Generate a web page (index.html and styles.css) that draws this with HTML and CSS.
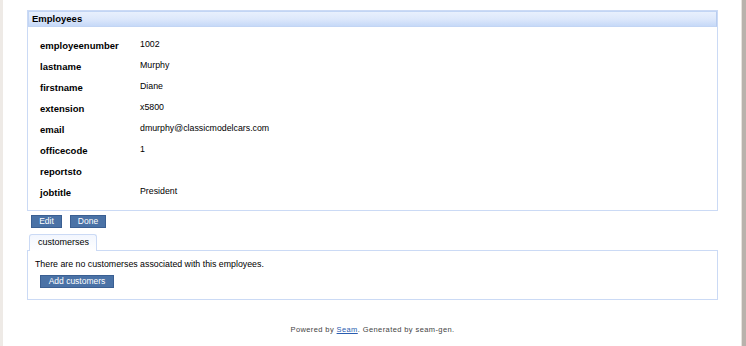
FILE: index.html
```html
<!DOCTYPE html>
<html>
<head>
<meta charset="utf-8">
<link rel="stylesheet" href="styles.css">
</head>
<body>
<div class="page">
  <div class="panel">
    <div class="panel-head">Employees</div>
    <table class="props">
      <tr><th>employeenumber</th><td>1002</td></tr>
      <tr><th>lastname</th><td>Murphy</td></tr>
      <tr><th>firstname</th><td>Diane</td></tr>
      <tr><th>extension</th><td>x5800</td></tr>
      <tr><th>email</th><td>dmurphy@classicmodelcars.com</td></tr>
      <tr><th>officecode</th><td>1</td></tr>
      <tr><th>reportsto</th><td></td></tr>
      <tr><th>jobtitle</th><td>President</td></tr>
    </table>
  </div>
  <div class="actions">
    <button class="btn btn-edit">Edit</button>
    <button class="btn btn-done">Done</button>
  </div>
  <div class="tabs">
    <div class="tab">customerses</div>
  </div>
  <div class="tab-panel">
    <div class="msg">There are no customerses associated with this employees.</div>
    <button class="btn btn-add">Add customers</button>
  </div>
  <div class="footer">Powered by <a href="#">Seam</a>. Generated by seam-gen.</div>
</div>
</body>
</html>
```
FILE: styles.css
```css
html, body {
  margin: 0;
  padding: 0;
  background: #ffffff;
}
body {
  font-family: "Liberation Sans", Arial, sans-serif;
  color: #000;
}
.page {
  width: 746px;
  min-height: 346px;
  box-sizing: border-box;
  padding: 10px 24px 0 24px;
  border-left: 3px solid #eeeae6;
  border-right: 4px solid #b8b2ac;
  box-shadow: inset -1px 0 0 #e6e2de;
  display: flex;
  flex-direction: column;
  align-items: flex-start;
}
.panel {
  width: 691px;
  box-sizing: border-box;
  border: 1px solid #cbdaf5;
  height: 201px;
}
.panel-head {
  height: 16px;
  box-sizing: border-box;
  background: linear-gradient(#e8f0fd 0%, #dde8fb 50%, #c6d9f8 100%);
  border: 1px solid #c2d5f4;
  border-right-color: #b8cdf0;
  font-weight: bold;
  font-size: 9.5px;
  line-height: 14px;
  padding-left: 3px;
  color: #000;
}
.props {
  border-collapse: collapse;
  margin: 8px 0 0 12px;
}
.props th {
  text-align: left;
  font-weight: bold;
  font-size: 9.5px;
  width: 100px;
  height: 21px;
  padding: 0;
  vertical-align: middle;
}
.props td {
  font-size: 8.8px;
  vertical-align: middle;
  padding: 0 0 4px 0;
  height: 21px;
  box-sizing: border-box;
}
.actions {
  display: flex;
  gap: 8px;
  margin: 4px 0 0 4px;
}
.btn {
  font-family: "Liberation Sans", Arial, sans-serif;
  background: #4a72a6;
  color: #fff;
  border: 1px solid #3a5f92;
  font-size: 8.5px;
  height: 13px;
  padding: 0 8px;
  line-height: 11px;
  margin: 0;
  box-sizing: border-box;
}
.btn-edit { width: 31px; padding: 0; }
.btn-done { width: 36px; padding: 0; }
.tabs {
  margin: 6px 0 0 2px;
  display: flex;
  height: 16px;
}
.tab {
  width: 68px;
  box-sizing: border-box;
  border: 1px solid #cbdaf5;
  border-bottom: none;
  border-radius: 3px 3px 0 0;
  background: linear-gradient(#f2f6fe, #ffffff);
  font-size: 9px;
  line-height: 15px;
  padding-left: 8px;
  position: relative;
  z-index: 1;
  height: 17px;
}
.tab-panel {
  width: 691px;
  height: 50px;
  box-sizing: border-box;
  border: 1px solid #cbdaf5;
  padding: 7px 0 0 7px;
}
.msg {
  font-size: 8.8px;
  line-height: 12px;
}
.btn-add {
  margin: 2px 0 0 5px;
  width: 74px;
  padding: 0;
}
.footer {
  align-self: center;
  margin-top: 25px;
  font-size: 7.5px;
  letter-spacing: 0.4px;
  color: #444;
}
.footer a {
  color: #2a5db0;
}
```
